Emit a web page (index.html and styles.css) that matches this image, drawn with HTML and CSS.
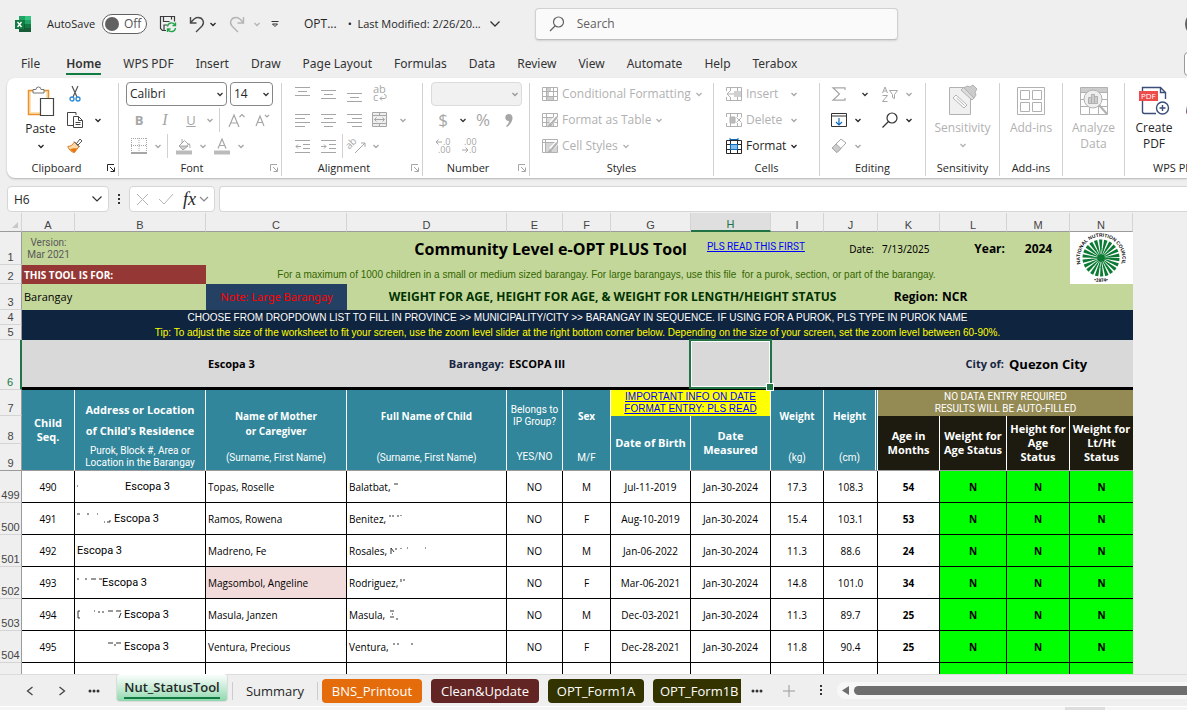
FILE: index.html
```html
<!DOCTYPE html>
<html lang="en">
  <head>
    <meta charset="UTF-8" />
    <meta name="viewport" content="width=device-width, initial-scale=1.0" />
    <title>OPT - Excel</title>
    <link rel="stylesheet" href="styles.css">
  </head>
  <body>
    <svg class="sprite" aria-hidden="true">
      <symbol id="chev" viewBox="0 0 8 8"><path d="M1.5 3 4 5.500 6.500 3" fill="none" stroke="currentColor" stroke-width="1.300" /></symbol>
      <symbol id="launcher" viewBox="0 0 8 8"><path d="M.5 7V.5H7M3 3l4 4M7.500 3.500v4h-4" fill="none" stroke="currentColor" /></symbol>
      <symbol id="grid" viewBox="0 0 16 14"><path d="M.5.5h15v13H.5zM.5 4.500h15M.5 9.500h15M4.500.5v13M11.500.5v13" fill="none" stroke="currentColor" /></symbol>
      <symbol id="brush" viewBox="0 0 12 12"><path d="M11 .8 5 7l-1-1" fill="none" stroke="#fff" stroke-width="4" /><path d="M11 1 5.500 7.500" stroke="currentColor" stroke-width="2" /><path d="M5 6.500C3 6.500 3 9.500.5 11c3 .6 6-.5 5.500-3z" fill="currentColor" /></symbol>
    </svg>

    <header class="titlebar">
      <svg class="logo" viewBox="0 0 16 16"><path d="M4 0h12v4H4z" fill="#21a366" /><path d="M10 0h6v4h-6z" fill="#33c481" /><path d="M4 4h6v4H4z" fill="#107c41" /><path d="M10 4h6v4h-6z" fill="#21a366" /><path d="M4 8h12v8H4z" fill="#185c37" /><path d="M10 8h6v4h-6z" fill="#107c41" /><path d="M0 4h9v9H0z" fill="#107c41" /><path d="m2.500 6 4 5M6.500 6l-4 5" stroke="#fff" stroke-width="1.400" /></svg>
      <label class="autosave" for="autosave">AutoSave</label>
      <span class="toggle"><input type="checkbox" id="autosave" /><span class="toggle-text">Off</span></span>
      <button class="tb save" aria-label="Save"><svg width="18" height="18" viewBox="0 0 18 18" fill="none" stroke="#3b3b3b" stroke-width="1.200"><path d="M7 15.500H3.500l-2-2V1.500h14v5M4.500 1.500v5h6M5 15v-5h3M12.500 1.500v3" /><path d="M8.500 11.500a4 4 0 0 1 7.500-1.500M16.500 7.500V10.500h-3M16.500 13a4 4 0 0 1-7.500 1.500M8.500 17v-3h3" stroke="#21a34a" stroke-width="1.400" /></svg></button>
      <button class="tb undo" aria-label="Undo"><svg width="16" height="17" viewBox="0 0 16 17" fill="none" stroke="#4a4a4a" stroke-width="1.400"><path d="M1.500 1v6h6M1.500 7C4 3.500 6 1.500 9 1.500c5 0 7 5 4 8.500L7 16" /></svg></button>
      <button class="tb drop" aria-label="Undo list"><svg width="8" height="8"><use href="#chev" /></svg></button>
      <button class="tb redo" aria-label="Redo" disabled><svg width="16" height="17" viewBox="0 0 16 17" fill="none" stroke="#b4b4b4" stroke-width="1.400"><path d="M14.500 1v6h-6M14.500 7C12 3.500 10 1.500 7 1.500c-5 0-7 5-4 8.500L9 16" /></svg></button>
      <button class="tb drop" aria-label="Redo list" disabled><svg width="8" height="8"><use href="#chev" /></svg></button>
      <button class="tb qat" aria-label="Customize Quick Access Toolbar"><svg width="8" height="8" viewBox="0 0 8 8" fill="none" stroke="#333"><path d="M.5 1.500h7M1.500 4 4 6.500 6.500 4z" /></svg></button>
      <button class="doc"><span>OPT...</span><span class="modified">•&nbsp; Last Modified: 2/26/20...</span><svg width="12" height="8" viewBox="0 0 12 8" fill="none" stroke="#333" stroke-width="1.300"><path d="m1.500 1.500 4.500 4.500 4.500-4.500" /></svg></button>
      <div class="search">
        <svg width="16" height="16" viewBox="0 0 16 16" fill="none" stroke="#616161" stroke-width="1.200"><circle cx="9.500" cy="6" r="5" /><path d="M6 10 1 15" /></svg>
        <input type="search" aria-label="Search" placeholder="Search" />
      </div>
      <span class="avatar"></span>
    </header>

    <nav class="menu">
      <a href="#">File</a>
      <a href="#" class="active">Home</a>
      <a href="#">WPS PDF</a>
      <a href="#">Insert</a>
      <a href="#">Draw</a>
      <a href="#">Page Layout</a>
      <a href="#">Formulas</a>
      <a href="#">Data</a>
      <a href="#">Review</a>
      <a href="#">View</a>
      <a href="#">Automate</a>
      <a href="#">Help</a>
      <a href="#">Terabox</a>
      <button class="comments" aria-label="Comments"></button>
    </nav>

    <section class="ribbon">
      <div class="group clipboard">
        <div class="group-body side">
          <button class="big">
            <svg width="28" height="30" viewBox="0 0 28 30"><path d="M1.500 4.500h20v24h-20z" fill="#fde3b4" stroke="#e8912d" stroke-width="1.500" /><path d="M4 6h15v20H4z" fill="#fff" /><path d="M6 7V3.500h3a2.500 2.500 0 0 1 5 0h3V7z" fill="#fff" stroke="#777" /><path d="M13.500 12.500h13v17h-13z" fill="#fff" stroke="#444" stroke-width="1.200" /></svg>
            <span>Paste</span>
            <svg width="8" height="8"><use href="#chev" /></svg>
          </button>
          <div class="rows">
            <div class="row"><button class="ib" aria-label="Cut"><svg width="12" height="16" viewBox="0 0 12 16" fill="none"><path d="M3 0 8 11M9 0 4 11" stroke="#555" stroke-width="1.200" /><circle cx="3" cy="13" r="2" stroke="#2b88d8" stroke-width="1.300" /><circle cx="9" cy="13" r="2" stroke="#2b88d8" stroke-width="1.300" /></svg></button></div>
            <div class="row"><button class="ib" aria-label="Copy"><svg width="16" height="16" viewBox="0 0 16 16" fill="#fff" stroke="#444"><path d="M6 13.500H.5V.5H9V3M6.500 4.500h5l4 4v7h-9zM11.500 4.500v4h4M8.500 10.500h5M8.500 12.500h5" /></svg></button><button class="dd" aria-label="Copy options"><svg width="8" height="8"><use href="#chev" /></svg></button></div>
            <div class="row"><button class="ib" aria-label="Format Painter"><svg width="16" height="16" viewBox="0 0 16 16"><path d="m7.500 4 4.500 4.500-4.500 6C5 14.500 2 12 .8 8.500 3.500 8.500 6 6.500 7.500 4z" fill="#fbd9a8" stroke="#e07b1a" /><path d="M3 11c2 0 4.500-1 7-.5L7.500 14.500C6 14 4 13 3 11z" fill="#e8780f" /><path d="M7 3.500 12.500 9M9.500 5.500 13 1l2 2-4 4z" fill="#fff" stroke="#555" /></svg></button></div>
          </div>
        </div>
        <div class="caption">Clipboard</div>
        <button class="launch" aria-label="Clipboard settings"><svg width="8" height="8"><use href="#launcher" /></svg></button>
      </div>

      <div class="group font">
        <div class="rows">
          <div class="row gap"><select class="combo face" aria-label="Font"><option>Calibri</option></select><select class="combo size" aria-label="Font size"><option>14</option></select></div>
          <div class="row off"><button class="ib" disabled><b>B</b></button><button class="ib" disabled><i>I</i></button><button class="ib" disabled><u>U</u></button><button class="dd" aria-label="Underline style" disabled><svg width="8" height="8"><use href="#chev" /></svg></button><span class="sep"></span><button class="ib" aria-label="Increase font size" disabled><svg width="17" height="15" viewBox="0 0 17 15" fill="none" stroke="currentColor" stroke-width="1.200"><path d="M1 14 6 2l5 12M3 10h6M11.500 4l2.500-2.500L16.500 4" /></svg></button><button class="ib" aria-label="Decrease font size" disabled><svg width="15" height="13" viewBox="0 0 15 13" fill="none" stroke="currentColor" stroke-width="1.200"><path d="m1 12 4-10 4 10M2.500 8.500h5M10 1l2 2 2-2" /></svg></button></div>
          <div class="row off"><button class="ib" aria-label="Borders" disabled><svg width="16" height="16" viewBox="0 0 16 16" fill="none" stroke="currentColor"><path d="M.5 0v14M15.500 0v14M0 .5h16M8 0v14M0 7.500h16" stroke-dasharray="1 1" /><path d="M0 15h16" stroke-width="2" /></svg></button><button class="dd" aria-label="Border options" disabled><svg width="8" height="8"><use href="#chev" /></svg></button><span class="sep"></span><button class="ib" aria-label="Fill color" disabled><svg width="16" height="17" viewBox="0 0 16 17" fill="none" stroke="currentColor"><path d="M3 8 8.500 2.500 12.500 6.500 7 11.500zM6 5V1M12 7c1-3 2-1 2 3" /><path d="M3 8h9l-5 4z" fill="#ccc" /><path d="M0 14.500h16" stroke-width="4" stroke="#bbb" /></svg></button><button class="dd" aria-label="Fill color options" disabled><svg width="8" height="8"><use href="#chev" /></svg></button><button class="ib" aria-label="Font color" disabled><svg width="16" height="17" viewBox="0 0 16 17" fill="none" stroke="currentColor" stroke-width="1.200"><path d="M4 10.500 8 1l4 9.500M5.500 7.500h5" /><path d="M0 14.500h16" stroke-width="4" stroke="#bbb" /></svg></button><button class="dd" aria-label="Font color options" disabled><svg width="8" height="8"><use href="#chev" /></svg></button></div>
        </div>
        <div class="caption">Font</div>
        <button class="launch off" aria-label="Font settings" disabled><svg width="8" height="8"><use href="#launcher" /></svg></button>
      </div>

      <div class="group align">
        <div class="rows off">
          <div class="row"><button class="ib" aria-label="Top Align" disabled><svg width="15" height="15" viewBox="0 0 15 15" stroke="currentColor"><path d="M0 .5h15M3 4.500h9M0 8.500h15" /></svg></button><button class="ib" aria-label="Middle Align" disabled><svg width="15" height="15" viewBox="0 0 15 15" stroke="currentColor"><path d="M0 3.500h15M3 7.500h9M0 11.500h15" /></svg></button><button class="ib" aria-label="Bottom Align" disabled><svg width="15" height="15" viewBox="0 0 15 15" stroke="currentColor"><path d="M0 6.500h15M3 10.500h9M0 14.500h15" /></svg></button><button class="ib" aria-label="Wrap Text" disabled><svg width="16" height="18" viewBox="0 0 16 18" fill="none" stroke="currentColor"><text x="1" y="8" font-size="11" font-family="Open Sans" fill="currentColor" stroke="none">ab</text><text x="1" y="16" font-size="11" font-family="Open Sans" fill="currentColor" stroke="none">c</text><path d="M12 9.500c3 0 3 4 0 4H8M10 11.500l-2 2 2 2" /></svg></button></div>
          <div class="row"><button class="ib" aria-label="Align Left" disabled><svg width="15" height="13" viewBox="0 0 15 13" stroke="currentColor"><path d="M0 .5h15M0 4.500h10M0 8.500h15M0 12.500h10" /></svg></button><button class="ib" aria-label="Center" disabled><svg width="15" height="13" viewBox="0 0 15 13" stroke="currentColor"><path d="M0 .5h15M3 4.500h9M0 8.500h15M3 12.500h9" /></svg></button><button class="ib" aria-label="Align Right" disabled><svg width="15" height="13" viewBox="0 0 15 13" stroke="currentColor"><path d="M0 .5h15M5 4.500h10M0 8.500h15M5 12.500h10" /></svg></button><button class="ib" aria-label="Merge" disabled><svg width="16" height="16" viewBox="0 0 16 16" fill="none" stroke="currentColor"><path d="M.5.5h14v14H.5zM.5 3.500h14M.5 11.500h14M7.500.5v3M7.500 11.500v3" fill="#eee" /><path d="M2.500 7.500h10M4.500 5.500l-2 2 2 2M10.500 5.500l2 2-2 2" /></svg></button><button class="dd merge" aria-label="Merge options" disabled><svg width="8" height="8"><use href="#chev" /></svg></button></div>
          <div class="row"><button class="ib" aria-label="Decrease Indent" disabled><svg width="15" height="13" viewBox="0 0 15 13" fill="none" stroke="currentColor"><path d="M0 .5h15M8 4.500h7M8 8.500h7M0 12.500h15M6 6.500H1M3 4.500l-2 2 2 2" /></svg></button><button class="ib" aria-label="Increase Indent" disabled><svg width="15" height="13" viewBox="0 0 15 13" fill="none" stroke="currentColor"><path d="M0 .5h15M8 4.500h7M8 8.500h7M0 12.500h15M0 6.500h5M3 4.500l2 2-2 2" /></svg></button><span class="sep tight"></span><button class="ib" aria-label="Orientation" disabled><svg width="18" height="18" viewBox="0 0 18 18" fill="none" stroke="currentColor"><text x="0" y="10" transform="rotate(-45 4 10)" font-size="10" font-family="Open Sans" fill="currentColor" stroke="none">ab</text><path d="M7 16 17 6M13 6h4v4" /></svg></button><button class="dd" aria-label="Orientation options" disabled><svg width="8" height="8"><use href="#chev" /></svg></button></div>
        </div>
        <div class="caption">Alignment</div>
        <button class="launch off" aria-label="Alignment settings" disabled><svg width="8" height="8"><use href="#launcher" /></svg></button>
      </div>

      <div class="group number">
        <div class="rows">
          <div class="row"><select class="combo format" aria-label="Number format" disabled><option></option></select></div>
          <div class="row off"><button class="ib glyph" disabled>$</button><button class="dd dark" aria-label="Currency options"><svg width="8" height="8"><use href="#chev" /></svg></button><button class="ib glyph" disabled>%</button><button class="ib" aria-label="Comma Style" disabled><svg width="8" height="13" viewBox="0 0 8 13" fill="currentColor"><path d="M4 0c5 0 5 8-2 13l-1-1c2-2 3-3 3-5C-1 7-1 0 4 0z" /></svg></button></div>
          <div class="row off"><button class="ib" aria-label="Increase Decimal" disabled><svg width="16" height="16" viewBox="0 0 16 16" fill="none" stroke="currentColor"><text x="8" y="7" font-size="9" font-family="Open Sans" fill="currentColor" stroke="none">.0</text><text x="3" y="15" font-size="9" font-family="Open Sans" fill="currentColor" stroke="none">.00</text><path d="M7 4H1M3.500 1.500 1 4l2.500 2.500" /></svg></button><button class="ib" aria-label="Decrease Decimal" disabled><svg width="16" height="16" viewBox="0 0 16 16" fill="none" stroke="currentColor"><text x="3" y="7" font-size="9" font-family="Open Sans" fill="currentColor" stroke="none">.00</text><text x="8" y="15" font-size="9" font-family="Open Sans" fill="currentColor" stroke="none">.0</text><path d="M1 12h6M4.500 9.500 7 12l-2.500 2.500" /></svg></button></div>
        </div>
        <div class="caption">Number</div>
        <button class="launch off" aria-label="Number settings" disabled><svg width="8" height="8"><use href="#launcher" /></svg></button>
      </div>

      <div class="group styles">
        <div class="rows off">
          <div class="row"><button class="tx" disabled><svg width="16" height="14" viewBox="0 0 16 14"><path d="M4 1h5v4H4zM4 9h8v4H4zM4 5h3v4H4z" fill="#ccc" /><use href="#grid" /></svg>Conditional Formatting<svg width="8" height="8"><use href="#chev" /></svg></button></div>
          <div class="row"><button class="tx" disabled><svg width="16" height="15" viewBox="0 0 16 15"><path d="M4 5h8v8H4z" fill="#ddd" /><use href="#grid" width="16" height="14" /><use href="#brush" x="4" y="3" width="12" height="12" /></svg>Format as Table<svg width="8" height="8"><use href="#chev" /></svg></button></div>
          <div class="row"><button class="tx" disabled><svg width="16" height="15" viewBox="0 0 16 15" fill="none"><path d="M.5.5h15v13H.5zM.5 3.500h15M3.500.5v13" stroke="currentColor" /><path d="M4 4h11v9H4z" fill="#d5d5d5" /><use href="#brush" x="4" y="3" width="12" height="12" /></svg>Cell Styles<svg width="8" height="8"><use href="#chev" /></svg></button></div>
        </div>
        <div class="caption">Styles</div>
      </div>

      <div class="group cells">
        <div class="rows">
          <div class="row off"><button class="tx" disabled><svg width="16" height="14" viewBox="0 0 16 14"><use href="#grid" /><path d="M7 4h8v6H7z" fill="#d0d0d0" /><path d="M0 4h8v6H0z" fill="#fff" /><path d="M8 7H1M4 4 1 7l3 3" fill="none" stroke="currentColor" /></svg><span class="word">Insert</span></button><button class="dd" aria-label="Insert options" disabled><svg width="8" height="8"><use href="#chev" /></svg></button></div>
          <div class="row off"><button class="tx" disabled><svg width="16" height="14" viewBox="0 0 16 14"><use href="#grid" /><path d="M0 4h16v6H0z" fill="#fff" /><path d="M4 4h5v6H4z" fill="#bbb" stroke="currentColor" /><path d="m10.500 4.500 5 5M15.500 4.500l-5 5" stroke="currentColor" /></svg><span class="word">Delete</span></button><button class="dd" aria-label="Delete options" disabled><svg width="8" height="8"><use href="#chev" /></svg></button></div>
          <div class="row"><button class="tx"><svg width="16" height="16" viewBox="0 0 16 16"><path d="M4 1.500h8M4 0v3M12 0v3" stroke="#0f6cbd" /><use href="#grid" y="2" width="16" height="14" /><path d="M4.500 6.500h7v5h-7z" fill="#83beec" stroke="#0f6cbd" /></svg>Format<svg width="8" height="8"><use href="#chev" /></svg></button></div>
        </div>
        <div class="caption">Cells</div>
      </div>

      <div class="group editing">
        <div class="rows">
          <div class="row off"><button class="ib" aria-label="AutoSum" disabled><svg width="14" height="14" viewBox="0 0 14 14" fill="none" stroke="currentColor" stroke-width="1.200"><path d="M13 3V.8H1L7.500 7 1 13.200h12V11" /></svg></button><button class="dd wide dark" aria-label="AutoSum options"><svg width="8" height="8"><use href="#chev" /></svg></button><button class="ib sort" aria-label="Sort and Filter" disabled><svg width="16" height="17" viewBox="0 0 16 17" fill="none" stroke="currentColor"><path d="M.5 7 3 1l2.500 6M1.500 5h3M.5 9.500h5l-5 6h5M7.500 4.500h8l-3 4v4l-2-1v-3z" /></svg></button><button class="dd" aria-label="Sort options" disabled><svg width="8" height="8"><use href="#chev" /></svg></button></div>
          <div class="row"><button class="ib" aria-label="Fill"><svg width="16" height="14" viewBox="0 0 16 14" fill="none" stroke="#333"><path d="M.5.5h15v13H.5zM.5 3h15" /><path d="M8 5v7M5 9l3 3 3-3" stroke="#0f6cbd" stroke-width="1.200" /></svg></button><button class="dd" aria-label="Fill options"><svg width="8" height="8"><use href="#chev" /></svg></button><button class="ib find" aria-label="Find and Select"><svg width="16" height="16" viewBox="0 0 16 16" fill="none" stroke="#333" stroke-width="1.200"><circle cx="10" cy="6" r="5" /><path d="m6.500 9.500-6 6" /></svg></button><button class="dd" aria-label="Find options"><svg width="8" height="8"><use href="#chev" /></svg></button></div>
          <div class="row off"><button class="ib" aria-label="Clear" disabled><svg width="16" height="16" viewBox="0 0 16 16" stroke="currentColor"><path d="m1 10 9-9 5 4-9 9.500z" fill="#fff" /><path d="m1 10 4-4 5 4.500-4 4z" fill="#ccc" /></svg></button><button class="dd" aria-label="Clear options" disabled><svg width="8" height="8"><use href="#chev" /></svg></button></div>
        </div>
        <div class="caption">Editing</div>
      </div>

      <div class="group sensitivity">
        <button class="big off" disabled>
          <svg width="28" height="30" viewBox="0 0 28 30" stroke="currentColor"><path d="M.5 2.500h21v27H.5z" fill="#f0f0f0" /><path d="m4 13 3-3 11 10-3 3z" fill="#fff" /><path d="m7.500 13 8 7.500" /><path d="m12 5 3-3 11 10-3 3z" fill="#ddd" /><path d="m15 3 3-2 3 1 3-2 4 4-2 3 1 3-2 3z" fill="#ccc" /></svg>
          <span>Sensitivity</span>
          <svg width="8" height="8"><use href="#chev" /></svg>
        </button>
        <div class="caption">Sensitivity</div>
      </div>

      <div class="group addins">
        <button class="big off" disabled>
          <svg width="28" height="30" viewBox="0 0 28 30" fill="none" stroke="currentColor"><path d="M.5 2.500h27v27H.5zM3.500 5.500h9v9h-9zM15.500 5.500h9v9h-9zM3.500 17.500h9v9h-9zM15.500 17.500h9v9h-9z" /></svg>
          <span>Add-ins</span>
        </button>
        <div class="caption">Add-ins</div>
      </div>

      <div class="group analyze">
        <button class="big off" disabled>
          <svg width="28" height="30" viewBox="0 0 28 30" fill="none" stroke="currentColor"><path d="M.5 2.500h27v27H.5zM.5 7.500h27M.5 14.500h27M.5 21.500h27M9.500 7.500v22M18.500 7.500v22" /><path d="M1 3h26v4H1z" fill="#ccc" stroke="none" /><circle cx="13" cy="14" r="9" fill="#eee" /><path d="m19 20 8 9" stroke-width="2" /><path d="M8.500 12.500h3v6h-3zM11.500 9.500h3v9h-3zM14.500 11.500h3v7h-3z" fill="#ccc" /></svg>
          <span>Analyze<br />Data</span>
        </button>
      </div>

      <div class="group wps">
        <div class="side">
          <button class="big">
            <svg width="30" height="30" viewBox="0 0 30 30" fill="none" stroke="#3b4d78" stroke-width="1.400"><path d="M17 28.500H5.500a2 2 0 0 1-2-2V2.500h18l5 5V14M21.500 2.500V7.500h5" /><circle cx="23.500" cy="23" r="6" fill="#fff" /><path d="M23.500 20v6M20.500 23h6" /><path d="M0 6h19v10H0z" fill="#ee4b4b" stroke="none" /><text x="2" y="14" font-size="8" font-family="Open Sans" fill="#fff" stroke="none">PDF</text></svg>
            <span>Create<br />PDF</span>
          </button>
          <button class="big share" aria-label="Share" disabled>
            <svg width="24" height="30" viewBox="0 0 24 30" fill="none" stroke="#3b4d78"><path d="M2.500 13.500h18v14h-20z" /><path d="M0 28h22" stroke="#ee4b4b" /></svg>
          </button>
        </div>
        <div class="caption">WPS PDF</div>
      </div>
    </section>

    <section class="formula">
      <input class="namebox" aria-label="Name box" value="H6" />
      <span class="vdots"><svg width="3" height="11" viewBox="0 0 3 11" fill="#333"><path d="M0 0h2v2H0zM0 4h2v2H0zM0 8h2v2H0z" /></svg></span>
      <div class="fxbox">
        <button aria-label="Cancel"><svg width="13" height="13" viewBox="0 0 13 13" stroke="#b5b5b5"><path d="m1 1 11 11M12 1 1 12" /></svg></button>
        <button aria-label="Enter"><svg width="16" height="12" viewBox="0 0 16 12" fill="none" stroke="#b5b5b5"><path d="m1 6 5 5L15 1" /></svg></button>
        <button class="fx" aria-label="Insert Function">fx</button>
        <svg width="10" height="7" viewBox="0 0 10 7" fill="none" stroke="#888" stroke-width="1.200"><path d="m1 1 4 4 4-4" /></svg>
      </div>
      <input class="formula-input" aria-label="Formula bar" />
    </section>

    <main class="sheet">
      <table>
        <colgroup>
          <col class="c-num" /><col class="c-a" /><col class="c-b" /><col class="c-c" /><col class="c-d" /><col class="c-e" /><col class="c-f" /><col class="c-gh" /><col class="c-gh" /><col class="c-i" /><col class="c-j" /><col class="c-k" /><col class="c-l" /><col class="c-mn" /><col class="c-mn" />
        </colgroup>
        <thead>
          <tr class="letters">
            <th class="corner"><svg width="6" height="6" viewBox="0 0 6 6"><path d="M6 0v6H0z" fill="#c8c8c8" /></svg></th>
            <th>A</th><th>B</th><th>C</th><th>D</th><th>E</th><th>F</th><th>G</th><th class="current">H</th><th>I</th><th>J</th><th>K</th><th>L</th><th>M</th><th>N</th>
          </tr>
        </thead>
        <tbody>
          <tr class="r1">
            <th>1</th>
            <td class="version">Version:<br />Mar 2021</td>
            <td colspan="6" class="title">Community Level e-OPT PLUS Tool</td>
            <td colspan="2" class="first"><a href="#">PLS READ THIS FIRST</a></td>
            <td class="right date">Date:</td>
            <td class="date">7/13/2025</td>
            <td class="right strong">Year:</td>
            <td class="center strong">2024</td>
            <td rowspan="2" class="seal">
              <svg width="52" height="50" viewBox="-26 -25 52 50">
                <path id="arc" d="M-16 13.900A21.200 21.200 0 1 1 16 13.900" fill="none" />
                <path id="arc2" d="M-12 20.800A24 24 0 0 0 12 20.800" fill="none" />
                <g fill="none" stroke="#0b7a33">
                  <circle r="14" stroke-width="9" stroke-dasharray="2.600 1.400" />
                  <circle r="7" stroke-width="6" stroke-dasharray="1.300 .7" />
                </g>
                <circle r="4" fill="#0b7a33" />
                <g font-weight="bold" font-family="Liberation Sans" fill="#111" text-anchor="middle">
                  <text font-size="5"><textPath href="#arc" startOffset="50%">NATIONAL NUTRITION COUNCIL</textPath></text>
                  <text font-size="5"><textPath href="#arc2" startOffset="50%">•1974•</textPath></text>
                </g>
              </svg>
            </td>
          </tr>
          <tr class="r2">
            <th>2</th>
            <td colspan="2" class="toolfor">THIS TOOL IS FOR:</td>
            <td colspan="10" class="maximum">For a maximum of 1000 children in a small or medium sized barangay. For large barangays, use this file&nbsp; for a purok, section, or part of the barangay.</td>
            <td></td>
          </tr>
          <tr class="r3">
            <th>3</th>
            <td colspan="2" class="level">Barangay</td>
            <td class="note">Note: Large Barangay</td>
            <td colspan="7" class="subtitle">WEIGHT FOR AGE, HEIGHT FOR AGE, &amp; WEIGHT FOR LENGTH/HEIGHT STATUS</td>
            <td class="right strong">Region:</td>
            <td class="strong">NCR</td>
            <td></td><td></td>
          </tr>
          <tr class="r4"><th>4</th><td colspan="14">CHOOSE FROM DROPDOWN LIST TO FILL IN PROVINCE &gt;&gt; MUNICIPALITY/CITY &gt;&gt; BARANGAY IN SEQUENCE. IF USING FOR A PUROK, PLS TYPE IN PUROK NAME</td></tr>
          <tr class="r5"><th>5</th><td colspan="14">Tip: To adjust the size of the worksheet to fit your screen, use the zoom level slider at the right bottom corner below. Depending on the size of your screen, set the zoom level between 60-90%.</td></tr>
          <tr class="r6">
            <th class="current">6</th>
            <td></td><td></td>
            <td>Escopa 3</td>
            <td class="right navy">Barangay:</td>
            <td colspan="3">ESCOPA III</td>
            <td class="selected"></td>
            <td colspan="4" class="right navy">City of:</td>
            <td colspan="2" class="city">Quezon City</td>
          </tr>
          <tr class="r7 head">
            <th>7</th>
            <td rowspan="3" class="wide-bold">Child<br />Seq.</td>
            <td rowspan="3" class="address"><p class="wide-bold">Address or Location<br />of Child's Residence</p><p>Purok, Block #, Area or<br />Location in the Barangay</p></td>
            <td rowspan="3" class="field"><p>Name of Mother<br />or Caregiver</p><small>(Surname, First Name)</small></td>
            <td rowspan="3" class="field"><p>Full Name of Child</p><small>(Surname, First Name)</small></td>
            <td rowspan="3" class="field plain"><p>Belongs to<br />IP Group?</p><small>YES/NO</small></td>
            <td rowspan="3" class="field"><p>Sex</p><small>M/F</small></td>
            <td colspan="2" class="important"><a href="#">IMPORTANT INFO ON DATE FORMAT ENTRY: PLS READ</a></td>
            <td rowspan="3" class="field"><p>Weight</p><small>(kg)</small></td>
            <td rowspan="3" class="field dbl"><p>Height</p><small>(cm)</small></td>
            <td colspan="4" class="auto">NO DATA ENTRY REQUIRED<br />RESULTS WILL BE AUTO-FILLED</td>
          </tr>
          <tr class="r8 head">
            <th>8</th>
            <td rowspan="2" class="wide-bold">Date of Birth</td>
            <td rowspan="2" class="wide-bold">Date Measured</td>
            <td rowspan="2" class="wide-bold black">Age in Months</td>
            <td rowspan="2" class="wide-bold black">Weight for Age Status</td>
            <td rowspan="2" class="wide-bold black">Height for<br />Age<br />Status</td>
            <td rowspan="2" class="wide-bold black">Weight for Lt/Ht Status</td>
          </tr>
          <tr class="r9"><th>9</th></tr>
        </tbody>
        <tbody class="data">
          <tr><th>499</th><td>490</td><td class="addr"><svg width="48" height="14" viewBox="0 0 48 14"><path d="M0 6h1" /></svg>Escopa 3</td><td>Topas, Roselle</td><td>Balatbat,<svg width="40" height="14" viewBox="0 0 40 14"><path d="M3 4h4" /></svg></td><td>NO</td><td>M</td><td>Jul-11-2019</td><td>Jan-30-2024</td><td>17.3</td><td class="dbl">108.3</td><td>54</td><td>N</td><td>N</td><td>N</td></tr>
          <tr><th>500</th><td>491</td><td class="addr"><svg width="37" height="14" viewBox="0 0 37 14"><path d="M0 2h3M10 2h2M20 2h1M27 10h1M30 10h3M33 8v2" /></svg>Escopa 3</td><td>Ramos, Rowena</td><td>Benitez,<svg width="40" height="14" viewBox="0 0 40 14"><path d="M4 3v2M7 3v2M12 3v2M15 3v1" /></svg></td><td>NO</td><td>F</td><td>Aug-10-2019</td><td>Jan-30-2024</td><td>15.4</td><td class="dbl">103.1</td><td>53</td><td>N</td><td>N</td><td>N</td></tr>
          <tr><th>501</th><td>492</td><td class="addr">Escopa 3</td><td>Madreno, Fe</td><td>Rosales,<svg width="44" height="14" viewBox="0 0 44 14"><path d="M4 10V4l3 4M9 4v2M14 4v1M20 4h1M38 4h1" /></svg></td><td>NO</td><td>M</td><td>Jan-06-2022</td><td>Jan-30-2024</td><td>11.3</td><td class="dbl">88.6</td><td>24</td><td>N</td><td>N</td><td>N</td></tr>
          <tr><th>502</th><td>493</td><td class="addr"><svg width="25" height="14" viewBox="0 0 25 14"><path d="M0 3h2M8 3h2M14 3h5M22 3h3" /></svg>Escopa 3</td><td class="flag">Magsombol, Angeline</td><td>Rodriguez,<svg width="30" height="14" viewBox="0 0 30 14"><path d="M3 3v3M6 3v2" /></svg></td><td>NO</td><td>F</td><td>Mar-06-2021</td><td>Jan-30-2024</td><td>14.8</td><td class="dbl">101.0</td><td>34</td><td>N</td><td>N</td><td>N</td></tr>
          <tr><th>503</th><td>494</td><td class="addr"><svg width="47" height="14" viewBox="0 0 47 14"><path d="M3 3H1v7h2M17 3h1M22 3v2M26 3v2M31 3h5M39 3h5M44 5l-2 5" /></svg>Escopa 3</td><td>Masula, Janzen</td><td>Masula,<svg width="30" height="14" viewBox="0 0 30 14"><path d="M5 3h4M7 6h1M5 9h4M12 10v2" /></svg></td><td>NO</td><td>M</td><td>Dec-03-2021</td><td>Jan-30-2024</td><td>11.3</td><td class="dbl">89.7</td><td>25</td><td>N</td><td>N</td><td>N</td></tr>
          <tr><th>504</th><td>495</td><td class="addr"><svg width="47" height="14" viewBox="0 0 47 14"><path d="M31 3h5M39 3h5M38 4v2" /></svg>Escopa 3</td><td>Ventura, Precious</td><td>Ventura,<svg width="40" height="14" viewBox="0 0 40 14"><path d="M5 3v2M9 3v2M23 3v2" /></svg></td><td>NO</td><td>F</td><td>Dec-28-2021</td><td>Jan-30-2024</td><td>11.8</td><td class="dbl">90.4</td><td>25</td><td>N</td><td>N</td><td>N</td></tr>
          <tr><th></th><td></td><td></td><td></td><td></td><td></td><td></td><td></td><td></td><td></td><td class="dbl"></td><td></td><td></td><td></td><td></td></tr>
        </tbody>
      </table>
    </main>

    <footer class="tabs">
      <button class="nav" aria-label="Previous sheet"><svg width="8" height="10" viewBox="0 0 8 10" fill="none" stroke="#444" stroke-width="1.300"><path d="M6.500 1 1.500 5l5 4" /></svg></button>
      <button class="nav" aria-label="Next sheet"><svg width="8" height="10" viewBox="0 0 8 10" fill="none" stroke="#444" stroke-width="1.300"><path d="m1.500 1 5 4-5 4" /></svg></button>
      <button class="nav" aria-label="All sheets"><svg width="12" height="4" viewBox="0 0 12 4" fill="#333"><circle cx="2" cy="2" r="1.500" /><circle cx="6" cy="2" r="1.500" /><circle cx="10" cy="2" r="1.500" /></svg></button>
      <button class="tab active"><span>Nut_StatusTool</span></button>
      <button class="tab summary">Summary</button>
      <button class="tab orange">BNS_Printout</button>
      <button class="tab maroon">Clean&amp;Update</button>
      <button class="tab olive">OPT_Form1A</button>
      <button class="tab olive cut">OPT_Form1B</button>
      <button class="more" aria-label="More sheets"><svg width="12" height="4" viewBox="0 0 12 4" fill="#333"><circle cx="2" cy="2" r="1.500" /><circle cx="6" cy="2" r="1.500" /><circle cx="10" cy="2" r="1.500" /></svg></button>
      <button class="more" aria-label="New sheet"><svg width="12" height="12" viewBox="0 0 12 12" stroke="#999"><path d="M6 0v12M0 6h12" /></svg></button>
      <span class="more"><svg width="3" height="11" viewBox="0 0 3 11" fill="#333"><path d="M0 0h2v2H0zM0 4h2v2H0zM0 8h2v2H0z" /></svg></span>
      <div class="scroll"><svg width="7" height="9" viewBox="0 0 7 9"><path d="M7 0v9L0 4.500z" fill="#6e6e6e" /></svg><span class="thumb"></span></div>
    </footer>
    <div class="status"><span></span></div>
  </body>
</html>
```
FILE: styles.css
```css
* {
  box-sizing: border-box;
}

body {
  margin: 0;
  height: 100vh;
  display: flex;
  flex-direction: column;
  overflow: hidden;
  background: #efefef;
  color: #262626;
  font-family: 'Open Sans', 'Noto Sans', sans-serif;
  font-size: 12px;
  line-height: 16px;
}

button,
input,
select {
  margin: 0;
  padding: 0;
  border: 0;
  background: none;
  color: inherit;
  font: inherit;
}

svg {
  display: block;
  flex: none;
  overflow: visible;
}

p {
  margin: 0;
}

.sprite {
  position: absolute;
  width: 0;
  height: 0;
}

/* title bar */
.titlebar {
  flex: none;
  display: flex;
  align-items: center;
  height: 48px;
  padding-left: 15px;
  white-space: nowrap;
}

.logo {
  width: 16px;
  height: 16px;
}

.autosave {
  width: 71px;
  padding-left: 16px;
  font-size: 11px;
}

.toggle {
  display: flex;
  align-items: center;
  width: 45px;
  height: 20px;
  padding-left: 2px;
  border: 1px solid #616161;
  border-radius: 10px;
  background: #fff;
  color: #555;
}

.toggle input {
  appearance: none;
  width: 14px;
  height: 14px;
  border-radius: 50%;
  background: #616161;
}

.toggle-text {
  padding-left: 5px;
}

.tb {
  display: flex;
  justify-content: center;
}

.save {
  width: 42px;
}

.undo {
  width: 16px;
}

.drop {
  width: 16px;
}

.redo {
  width: 24px;
  margin-left: 4px;
}

.tb:disabled {
  color: #b4b4b4;
}

.qat {
  width: 20px;
}

.doc {
  display: flex;
  align-items: center;
  gap: 8px;
  margin-left: 19px;
}

.modified {
  padding-left: 3px;
  font-size: 11px;
}

.search {
  flex: 0 1 31%;
  display: flex;
  align-items: center;
  gap: 12px;
  height: 32px;
  margin-left: 34px;
  padding-left: 13px;
  border: 1px solid #d1d1d1;
  border-bottom-color: #bdbdbd;
  border-radius: 4px;
  background: #fafafa;
  box-shadow: 0 1px 2px rgba(0, 0, 0, 0.12);
}

.search input {
  flex: 1;
  outline: 0;
}

.search input::placeholder {
  color: #616161;
}

.avatar {
  width: 24px;
  height: 24px;
  margin-left: auto;
  margin-right: -22px;
  border-radius: 50%;
  background: #616161;
}

/* ribbon tabs */
.menu {
  flex: none;
  display: flex;
  gap: 22px;
  height: 30px;
  padding: 6px 0 0 21px;
  font-family: 'Noto Sans', 'Open Sans', sans-serif;
  white-space: nowrap;
}

.menu a {
  height: 21px;
  color: #333;
  text-decoration: none;
  line-height: 19px;
}

.menu .active {
  margin-left: 4px;
  border-bottom: 2px solid #107c41;
  font-weight: 600;
}

.comments {
  width: 24px;
  height: 24px;
  margin: -2px -21px 0 auto;
  border: 1px solid #999;
  border-radius: 4px;
  background: #fff;
}

/* ribbon */
.ribbon {
  flex: none;
  display: flex;
  height: 100px;
  margin-left: 7px;
  padding: 5px 0 2px;
  overflow: hidden;
  border-radius: 8px 0 0 8px;
  background: #fff;
  box-shadow: 0 1px 2px rgba(0, 0, 0, 0.25);
}

.group {
  position: relative;
  flex: none;
  display: flex;
  flex-direction: column;
  justify-content: space-between;
  border-right: 1px solid #d1d1d1;
  white-space: nowrap;
}

.clipboard {
  width: 112px;
}

.font {
  width: 163px;
}

.align {
  width: 141px;
}

.number {
  width: 107px;
}

.styles {
  width: 184px;
}

.cells,
.editing {
  width: 106px;
}

.sensitivity {
  width: 74px;
}

.addins {
  width: 63px;
}

.analyze {
  width: 62px;
}

.wps {
  width: 120px;
  border-right: 0;
}

.caption {
  height: 16px;
  font-size: 11px;
  text-align: center;
}

.clipboard .caption {
  padding-right: 12px;
}

.font .caption,
.align .caption,
.number .caption {
  padding-right: 16px;
}

.wps .caption {
  padding-left: 28px;
  text-align: left;
}

.side {
  display: flex;
}

.rows {
  margin-top: -2px;
  padding-left: 7px;
}

.clipboard .rows {
  padding-left: 0;
}

.styles .rows,
.cells .rows {
  padding-left: 12px;
}

.row {
  display: flex;
  align-items: center;
  height: 26px;
}

.gap {
  gap: 3px;
}

.off,
.off button {
  color: #a6a6a6;
}

.off .dark {
  color: #333;
}

.ib {
  display: flex;
  justify-content: center;
  align-items: center;
  width: 26px;
  height: 24px;
  font-size: 13px;
}

.ib i {
  font-family: 'Liberation Serif', serif;
  font-size: 16px;
}

.ib.glyph {
  font-size: 17px;
}

.dd {
  display: flex;
  justify-content: center;
  width: 12px;
}

.clipboard .dd {
  width: 20px;
}

.number .dd {
  width: 14px;
}

.align .dd.merge {
  width: 20px;
}

.editing .rows {
  padding-left: 6px;
}

.editing .dd.wide {
  width: 20px;
  padding-left: 6px;
}

.sep {
  width: 1px;
  height: 24px;
  margin: 0 3px;
  background: #d1d1d1;
}

.tight {
  margin: 0 1px;
}

.tx {
  display: flex;
  align-items: center;
  gap: 4px;
}

.off .tx {
  color: #b1b1b1;
}

.word {
  width: 42px;
  text-align: left;
}

.sort {
  margin-left: 5px;
}

.find {
  margin-left: 13px;
}

.combo {
  appearance: none;
  height: 24px;
  padding-left: 3px;
  border: 1px solid #868686;
  border-radius: 4px;
  background: #fff url("data:image/svg+xml,%3Csvg xmlns='http://www.w3.org/2000/svg' width='8' height='8'%3E%3Cpath d='M1.500 3 4 5.500 6.500 3' fill='none' stroke='%23333' stroke-width='1.300'/%3E%3C/svg%3E") no-repeat right 2px center;
}

.face {
  width: 101px;
}

.size {
  width: 43px;
}

.format {
  width: 91px;
  margin-left: 1px;
  border-color: #b8b8b8;
  background-color: #e4e4e4;
  opacity: 0.5;
}

.big {
  display: flex;
  flex-direction: column;
  align-items: center;
  gap: 5px;
  padding-top: 2px;
  line-height: 16px;
}

.clipboard .big {
  width: 55px;
  padding: 3px 0 0 12px;
}

.wps .big {
  width: 58px;
}

.wps .share {
  width: 30px;
}

.launch {
  position: absolute;
  right: 3px;
  bottom: 4px;
}

.off .big,
.big.off {
  color: #b1b1b1;
}

/* formula bar */
.formula {
  flex: none;
  display: flex;
  align-items: center;
  height: 35px;
  padding: 8px 0 1px 7px;
}

.namebox,
.fxbox,
.formula-input {
  height: 26px;
  border: 1px solid #d6d6d6;
  border-radius: 4px;
  background: #fff;
}

.namebox {
  width: 102px;
  padding-left: 6px;
  background: #fff url("data:image/svg+xml,%3Csvg xmlns='http://www.w3.org/2000/svg' width='12' height='8'%3E%3Cpath d='m1.500 1.500 4.500 4.500 4.500-4.500' fill='none' stroke='%23333' stroke-width='1.200'/%3E%3C/svg%3E") no-repeat right 5px center;
}

.vdots {
  display: flex;
  justify-content: center;
  width: 20px;
}

.fxbox {
  display: flex;
  align-items: center;
  gap: 9px;
  width: 86px;
  padding-left: 6px;
}

.fx {
  margin-right: -6px;
  font-family: 'Liberation Serif', serif;
  font-size: 18px;
  font-style: italic;
}

.formula-input {
  flex: 1;
  margin-left: 4px;
  border-right: 0;
  border-radius: 4px 0 0 4px;
}

/* worksheet */
.sheet {
  flex: 1;
  min-height: 0;
  overflow: hidden;
}

table {
  width: 1133px;
  table-layout: fixed;
  border-collapse: separate;
  border-spacing: 0;
  color: #000;
  font-size: 10px;
  line-height: 12px;
}

.c-num {
  width: 22px;
}

.c-a {
  width: 53px;
}

.c-b {
  width: 131px;
}

.c-c {
  width: 141px;
}

.c-d {
  width: 160px;
}

.c-e {
  width: 56px;
}

.c-f {
  width: 48px;
}

.c-gh {
  width: 80px;
}

.c-i {
  width: 53px;
}

.c-j {
  width: 54px;
}

.c-k {
  width: 62px;
}

.c-l {
  width: 67px;
}

.c-mn {
  width: 63px;
}

td,
th {
  padding: 0 2px;
  overflow: hidden;
  white-space: nowrap;
}

th {
  padding: 0 0 1px;
  border-right: 1px solid #9b9b9b;
  border-bottom: 1px solid #d4d4d4;
  background: #efefef;
  color: #444;
  font-family: 'Liberation Sans', Arial, sans-serif;
  font-size: 11px;
  font-weight: 400;
  text-align: center;
  vertical-align: bottom;
}

.letters th {
  height: 19px;
  padding: 0;
  border-right-color: #d4d4d4;
  border-bottom-color: #9b9b9b;
}

.letters .corner {
  padding: 0 0 3px 12px;
}

.letters .current {
  border-bottom: 2px solid #217346;
  background: #dfdfdf;
  color: #217346;
}

.right {
  text-align: right;
}

.center {
  text-align: center;
}

.strong {
  font-size: 12px;
  font-weight: 700;
}

.r1 td,
.r2 td,
.r3 td {
  background: #c4d79b;
}

.r1 {
  height: 33px;
}

.version,
.first,
.auto,
small,
.plain,
.address p,
.data .addr {
  font-family: Roboto, 'Liberation Sans', sans-serif;
}

.version {
  color: #595959;
  text-align: center;
}

.date {
  font-family: 'Noto Sans', 'Open Sans', sans-serif;
}

.r1 .date {
  padding: 0 4px;
}

.r1 .title {
  padding-right: 4px;
  font-size: 16px;
  font-weight: 700;
  text-align: right;
}

.r1 .first {
  padding: 0 0 3px 16px;
}

td a {
  color: #0000ff;
}

.r1 .seal {
  padding: 0 5px;
  background: #fff;
}

.r2 {
  height: 19px;
}

.r2 .toolfor {
  background: #953735;
  color: #fff;
  font-weight: 700;
}

.r2 .maximum {
  color: #336600;
  font-family: 'Liberation Sans', Arial, sans-serif;
  text-align: center;
}

.r3 {
  height: 26px;
}

.level {
  font-size: 11px;
}

.r3 .note {
  background: #244062;
  color: #ff0000;
  font-family: 'Noto Sans', 'Open Sans', sans-serif;
  font-size: 11px;
  text-align: center;
}

.r3 .subtitle {
  color: #003300;
  font-size: 12px;
  font-weight: 700;
  text-align: center;
}

.r4,
.r5 {
  height: 15px;
}

.r4 td,
.r5 td {
  padding-top: 1px;
  background: #0f243e;
  color: #fff;
  font-family: 'Liberation Sans', Arial, sans-serif;
  text-align: center;
}

.r5 td {
  color: #ffff00;
}

.r6 {
  height: 50px;
}

.r6 td {
  border-bottom: 3px solid #000;
  background: #d9d9d9;
  font-size: 11px;
  font-weight: 700;
}

.r6 th {
  border-right: 2px solid #217346;
  color: #217346;
}

.r6 .navy {
  padding-right: 3px;
  color: #16243f;
}

.r6 .city {
  font-size: 13px;
}

.r6 .selected {
  position: relative;
  overflow: visible;
}

.selected::before {
  content: '';
  position: absolute;
  inset: -1px -1px -2px -2px;
  border: 2px solid #217346;
  box-shadow: inset 0 0 0 1px #fff;
}

.selected::after {
  content: '';
  position: absolute;
  right: -3px;
  bottom: -4px;
  width: 6px;
  height: 6px;
  border: 1px solid #fff;
  background: #217346;
}

.r7 {
  height: 26px;
}

.r8 {
  height: 28px;
}

.r9 {
  height: 27px;
}

.r9 th {
  border-bottom-color: #9b9b9b;
}

.head td {
  border-right: 1px solid #fff;
  border-bottom: 1px solid #9b9b9b;
  background: #31869b;
  color: #fff;
  text-align: center;
  white-space: normal;
}

.head .wide-bold {
  font-family: 'Open Sans', sans-serif;
  font-size: 11px;
  font-weight: 700;
  line-height: 14px;
}

.head .address {
  padding: 9px 0 0;
  vertical-align: top;
}

.head .address .wide-bold {
  line-height: 21px;
}

.address p + p {
  padding-top: 4px;
}

.head .field {
  padding: 19px 0 0;
  font-weight: 700;
  vertical-align: top;
}

.field p {
  height: 42px;
  line-height: 15px;
}

.head .plain {
  padding-top: 14px;
  font-weight: 400;
}

.field.plain p {
  height: 47px;
  line-height: 12px;
}

small {
  font-size: 10px;
  font-weight: 400;
}

td.dbl,
.head td.dbl {
  border-right-width: 3px;
  border-right-style: double;
}

.head .important {
  border-bottom: 0;
  background: #ffff00;
  font-family: 'Liberation Sans', Arial, sans-serif;
}

.head .auto {
  border-bottom: 0;
  border-right: 0;
  background: #948a54;
}

.head .black {
  padding: 0;
  background: #1d1b10;
}

.head .black:last-child {
  border-right: 0;
}

.data tr {
  height: 32px;
}

.data td {
  border-right: 1px solid #000;
  border-bottom: 1px solid #000;
  background: #fff;
  text-align: center;
}

.data td svg {
  display: inline-block;
  margin: -1px 0;
  vertical-align: top;
  fill: none;
  stroke: #333;
}

.data td:nth-child(3),
.data td:nth-child(4),
.data td:nth-child(5) {
  text-align: left;
}

.data .addr {
  font-size: 11px;
}

.data .flag {
  background: #f2dcdb;
}

.data td:nth-child(12) {
  font-weight: 700;
}

.data td:nth-child(n + 13) {
  background: #00ff00;
  font-weight: 700;
}

.data td:last-child {
  border-right: 0;
}

/* sheet tabs */
.tabs {
  flex: none;
  display: flex;
  align-items: center;
  height: 32px;
  padding-left: 14px;
  border-top: 1px solid #dcdcdc;
}

.nav {
  display: flex;
  justify-content: center;
  width: 32px;
}

.tab {
  flex: none;
  height: 24px;
  margin-right: 9px;
  border-radius: 4px;
  font-size: 13px;
  white-space: nowrap;
}

.tab.active {
  align-self: flex-start;
  display: flex;
  justify-content: center;
  align-items: flex-end;
  width: 112px;
  height: 28px;
  margin: -1px 0 0 6px;
  padding-bottom: 2px;
  border: 1px solid #dcdcdc;
  border-top: 0;
  background: linear-gradient(#fff, #8fd8ae);
  font-weight: 600;
}

.tab.active span {
  border-bottom: 2px solid #107c41;
  line-height: 19px;
}

.summary {
  width: 86px;
  margin: 0 4px;
  border-right: 1px solid #ccc;
  border-left: 1px solid #ccc;
  border-radius: 0;
  height: 18px;
}

.orange {
  width: 100px;
  background: #e46c0a;
  color: #fff;
}

.maroon {
  width: 108px;
  background: #632523;
  color: #fff;
}

.olive {
  width: 96px;
  background: #333300;
  color: #fff;
}

.cut {
  width: 88px;
  margin-right: 0;
  padding-left: 7px;
  overflow: hidden;
  border-radius: 4px 0 0 4px;
  text-align: left;
}

.more {
  flex: none;
  display: flex;
  justify-content: center;
  width: 32px;
}

.scroll {
  flex: 1;
  display: flex;
  align-items: center;
  gap: 5px;
  height: 17px;
  padding-left: 5px;
  border-radius: 8px 0 0 8px;
  background: #f7f7f7;
}

.thumb {
  flex: 1;
  height: 9px;
  border-radius: 5px 0 0 5px;
  background: #6e6e6e;
}

.status {
  flex: none;
  height: 4px;
  border-top: 1px solid #fff;
  background: #f5f5f5;
}

.status span {
  display: block;
  width: 40px;
  height: 3px;
  margin: 0 82px 0 auto;
  background: #ddd;
}
```
